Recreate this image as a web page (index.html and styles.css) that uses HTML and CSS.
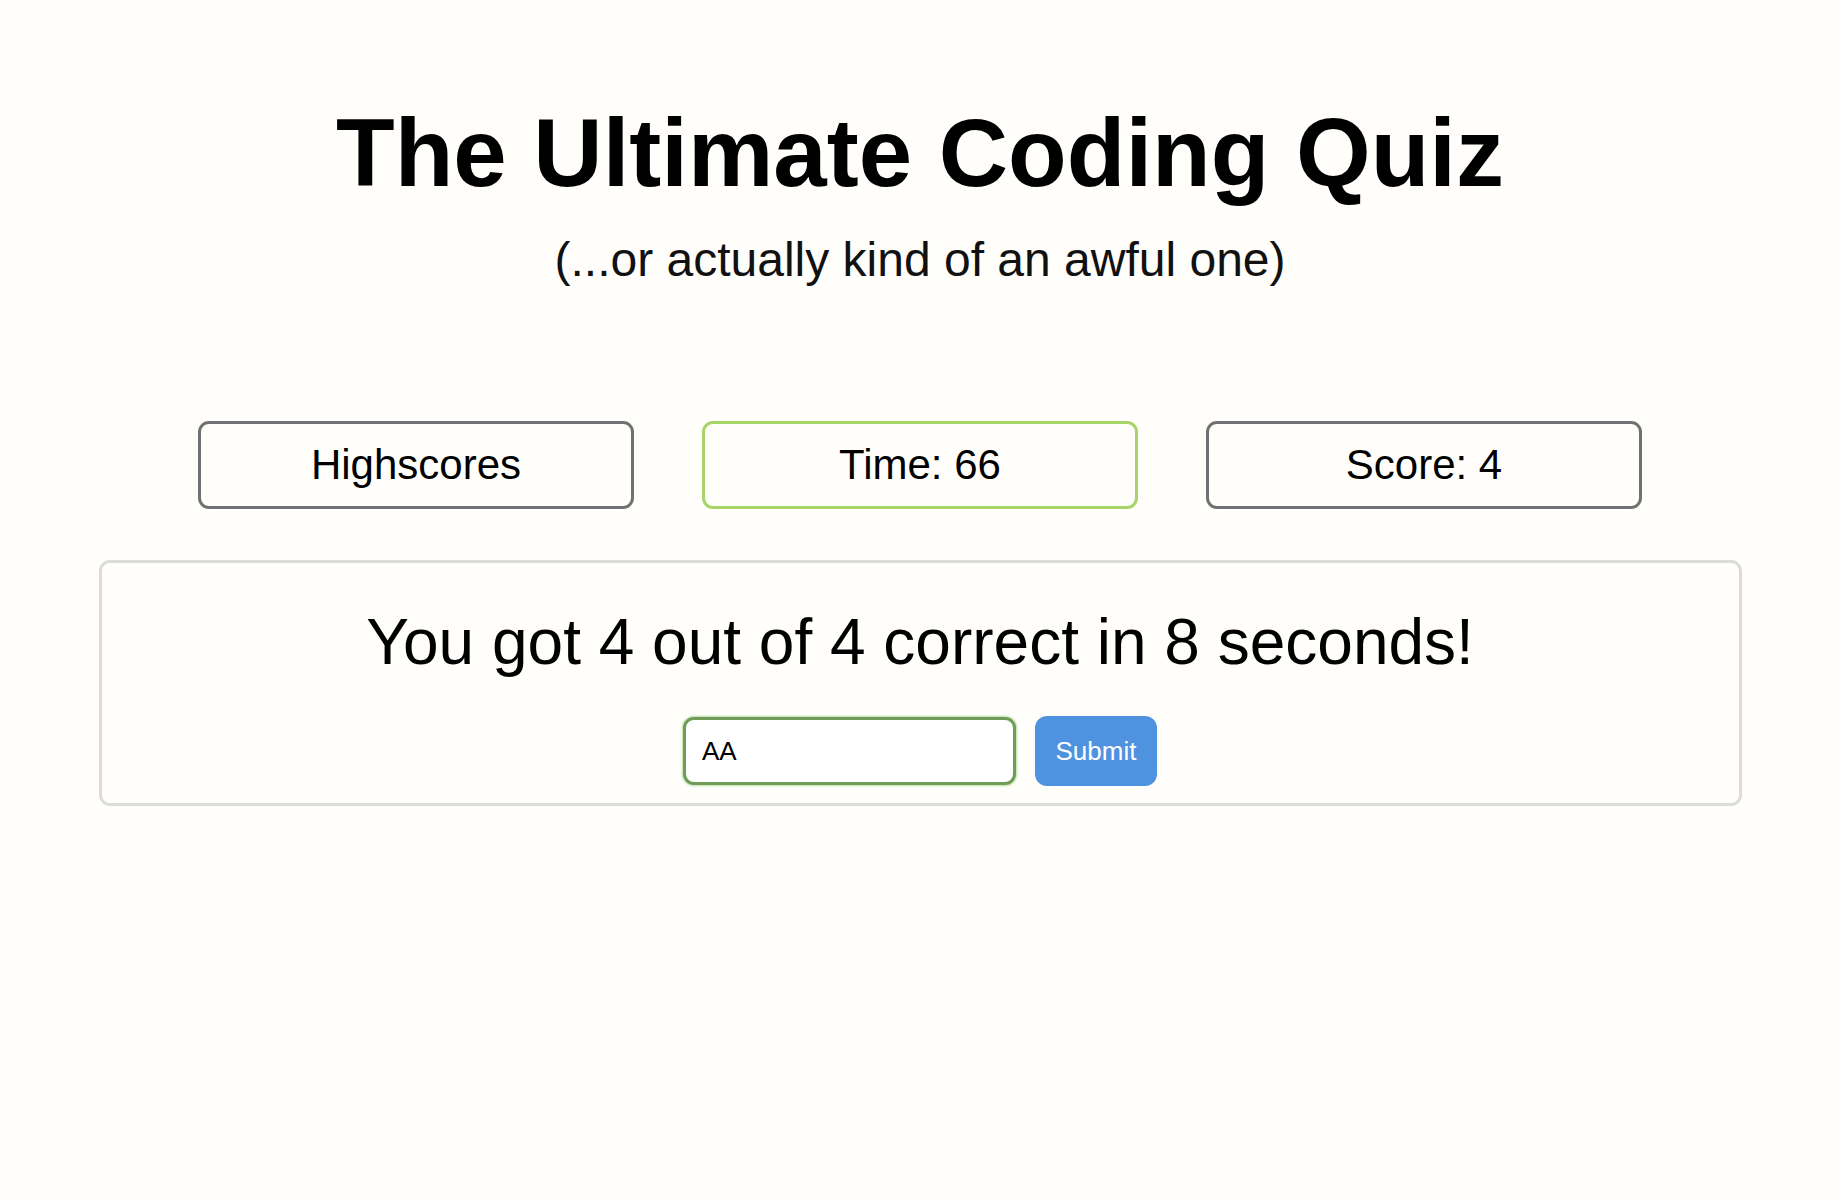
FILE: index.html
```html
<!DOCTYPE html>
<html lang="en">
<head>
<meta charset="utf-8">
<title>The Ultimate Coding Quiz</title>
<link rel="stylesheet" href="styles.css">
</head>
<body>
<header class="hero">
  <h1 class="title">The Ultimate Coding Quiz</h1>
  <p class="subtitle">(...or actually kind of an awful one)</p>
</header>
<main class="quiz">
  <nav class="stats">
    <button class="stat" type="button">Highscores</button>
    <div class="stat stat-time">Time: 66</div>
    <div class="stat">Score: 4</div>
  </nav>
  <section class="card">
    <h2 class="result">You got 4 out of 4 correct in 8 seconds!</h2>
    <form class="entry">
      <input class="initials" type="text" value="AA" autofocus>
      <button class="submit" type="button">Submit</button>
    </form>
  </section>
</main>
</body>
</html>
```
FILE: styles.css
```css
body {
  margin: 0;
  background: #fffefb;
  color: #000;
  font-family: "Liberation Sans", Arial, Helvetica, sans-serif;
}

.hero {
  padding-top: 98px;
  text-align: center;
}

.title {
  margin: 0;
  font-size: 96px;
  line-height: 110px;
  font-weight: 700;
}

.subtitle {
  margin: 24px 0 0;
  font-size: 48px;
  line-height: 56px;
  font-weight: 300;
  color: #111;
}

.stats {
  display: flex;
  justify-content: center;
  gap: 68px;
  margin-top: 133px;
}

.stat {
  width: 436px;
  height: 88px;
  box-sizing: border-box;
  border: 3px solid #707174;
  border-radius: 11px;
  background: transparent;
  display: flex;
  align-items: center;
  justify-content: center;
  font-family: inherit;
  font-size: 42px;
  color: #000;
  padding: 0;
}

.stat-time {
  border-color: #a6d467;
}

.card {
  width: 1643px;
  box-sizing: border-box;
  margin: 51px auto 0;
  border: 3px solid #dcdcdc;
  border-radius: 11px;
  padding: 42px 0 17px;
  text-align: center;
}

.result {
  margin: 0;
  font-size: 64px;
  line-height: 74px;
  font-weight: 400;
}

.entry {
  display: flex;
  justify-content: center;
  align-items: center;
  gap: 19px;
  margin: 37px 0 0;
}

.initials {
  width: 333px;
  height: 68px;
  box-sizing: border-box;
  border: 3px solid #6f9c58;
  border-radius: 11px;
  padding: 0 16px;
  background: #fff;
  font-family: inherit;
  font-size: 26px;
  color: #000;
  caret-color: #000;
  outline: none;
  box-shadow: 0 0 2px 1px rgba(140, 195, 110, 0.6);
}

.submit {
  width: 122px;
  height: 70px;
  border: 0;
  border-radius: 12px;
  background: #4f92df;
  color: #fff;
  font-family: inherit;
  font-size: 26px;
  padding: 0;
}
```
